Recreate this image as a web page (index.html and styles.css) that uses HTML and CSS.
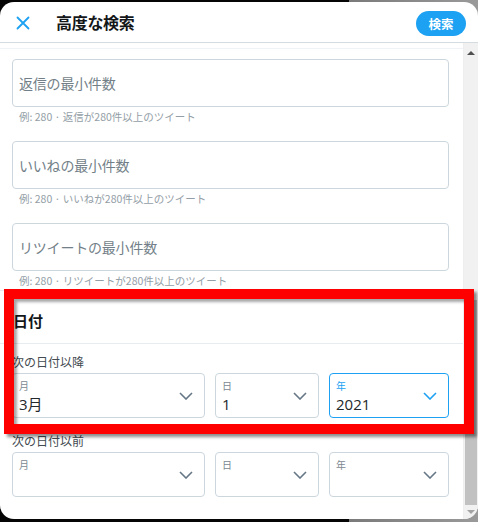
FILE: index.html
```html
<!DOCTYPE html>
<html lang="ja">
<head>
<meta charset="utf-8">
<link rel="stylesheet" href="styles.css">
</head>
<body>
<div class="modal">
  <header class="hdr">
    <span class="close">
      <svg width="14" height="14" viewBox="0 0 14 14"><path d="M1.5 1.5 L12.5 12.5 M12.5 1.5 L1.5 12.5" stroke="#1da1f2" stroke-width="1.8" fill="none" stroke-linecap="round"/></svg>
    </span>
    <h1 class="title">高度な検索</h1>
    <span class="search">検索</span>
  </header>
  <div class="body">
    <div class="scroll">
      <div class="topline"></div>
      <div class="field first"><span class="ph">返信の最小件数</span></div>
      <p class="help">例: 280 · 返信が280件以上のツイート</p>
      <div class="field"><span class="ph">いいねの最小件数</span></div>
      <p class="help">例: 280 · いいねが280件以上のツイート</p>
      <div class="field"><span class="ph">リツイートの最小件数</span></div>
      <p class="help">例: 280 · リツイートが280件以上のツイート</p>

      <div class="section"><h2 class="sec-title">日付</h2></div>

      <p class="lbl">次の日付以降</p>
      <div class="row">
        <div class="sel">
          <div class="sel-text"><span class="sl">月</span><span class="sv">3月</span></div>
          <svg class="chev" width="14" height="8" viewBox="0 0 14 8"><path d="M1 1 L7 7 L13 1" stroke="#657786" stroke-width="1.6" fill="none"/></svg>
        </div>
        <div class="sel">
          <div class="sel-text"><span class="sl">日</span><span class="sv">1</span></div>
          <svg class="chev" width="14" height="8" viewBox="0 0 14 8"><path d="M1 1 L7 7 L13 1" stroke="#657786" stroke-width="1.6" fill="none"/></svg>
        </div>
        <div class="sel focus">
          <div class="sel-text"><span class="sl">年</span><span class="sv">2021</span></div>
          <svg class="chev" width="14" height="8" viewBox="0 0 14 8"><path d="M1 1 L7 7 L13 1" stroke="#1da1f2" stroke-width="1.6" fill="none"/></svg>
        </div>
      </div>

      <p class="lbl second">次の日付以前</p>
      <div class="row">
        <div class="sel">
          <div class="sel-text"><span class="sl">月</span><span class="sv"></span></div>
          <svg class="chev" width="14" height="8" viewBox="0 0 14 8"><path d="M1 1 L7 7 L13 1" stroke="#657786" stroke-width="1.6" fill="none"/></svg>
        </div>
        <div class="sel">
          <div class="sel-text"><span class="sl">日</span><span class="sv"></span></div>
          <svg class="chev" width="14" height="8" viewBox="0 0 14 8"><path d="M1 1 L7 7 L13 1" stroke="#657786" stroke-width="1.6" fill="none"/></svg>
        </div>
        <div class="sel">
          <div class="sel-text"><span class="sl">年</span><span class="sv"></span></div>
          <svg class="chev" width="14" height="8" viewBox="0 0 14 8"><path d="M1 1 L7 7 L13 1" stroke="#657786" stroke-width="1.6" fill="none"/></svg>
        </div>
      </div>
    </div>
    <div class="sbar">
      <span class="arrow up"></span>
      <div class="track"><div class="thumb"></div></div>
      <span class="arrow down"></span>
    </div>
  </div>
  <div class="annot"></div>
</div>
</body>
</html>
```

FILE: styles.css
```css
* { box-sizing: border-box; }
html, body { margin: 0; padding: 0; }
body {
  width: 478px;
  height: 522px;
  overflow: hidden;
  background: linear-gradient(to right, #050505 0, #050505 73%, #7a7a7a 73%, #9a9a9a 100%);
  font-family: "Noto Sans CJK JP", "Noto Sans", sans-serif;
  color: #14171a;
}
.modal {
  position: relative;
  margin-top: 2px;
  width: 478px;
  height: 517px;
  background: #fff;
  border-radius: 14px;
  overflow: hidden;
  display: flex;
  flex-direction: column;
}
.hdr {
  height: 41px;
  flex: none;
  display: flex;
  align-items: center;
  padding: 0 12px 0 16px;
  border-bottom: 1px solid #d5dce1;
}
.close { width: 14px; height: 14px; display: flex; margin-top: 1px; }
.title {
  margin: 0 0 0 26px;
  font-size: 16px;
  font-weight: 700;
  line-height: 20px;
  flex: 1;
  letter-spacing: -0.3px;
}
.search {
  width: 50px;
  height: 25px;
  border-radius: 13px;
  background: #1da1f2;
  color: #fff;
  font-size: 12.5px;
  font-weight: 700;
  display: flex;
  align-items: center;
  justify-content: center;
  margin-top: 2px;
}
.body { flex: 1; display: flex; min-height: 0; }
.scroll { flex: 1; padding: 0 14px 0 12px; }
.topline { height: 6px; border-bottom: 1px solid #f0f3f5; margin: 0 -14px 0 -12px; }
.field {
  height: 48px;
  border: 1px solid #ccd6dd;
  border-radius: 4px;
  display: flex;
  align-items: center;
  padding-left: 6px;
  margin-top: 17px;
}
.field.first { margin-top: 10px; }
.ph { font-size: 14px; color: #737f88; letter-spacing: -0.2px; }
.help {
  margin: 3px 0 0;
  padding-left: 7px;
  height: 14px;
  line-height: 14px;
  font-size: 10.5px;
  color: #939ea6;
  white-space: nowrap;
}
.section {
  margin: 2px -14px 0 -12px;
  padding: 20px 12px 12px 13px;
  border-top: 1px solid #e6ecf0;
  border-bottom: 1px solid #e6ecf0;
}
.sec-title { margin: 0; font-size: 15px; font-weight: 700; line-height: 20px; }
.lbl {
  margin: 10px 0 0;
  font-size: 12px;
  line-height: 16px;
  color: #434a50;
}
.lbl.second { margin-top: 15px; }
.row {
  margin-top: 3px;
  display: grid;
  grid-template-columns: 193fr 104fr 120fr;
  gap: 10px;
}
.sel {
  height: 45px;
  border: 1px solid #ccd6dd;
  border-radius: 4px;
  display: flex;
  align-items: center;
  padding: 0 11px 0 6px;
}
.sel.focus { border-color: #1da1f2; }
.sel-text {
  flex: 1;
  display: flex;
  flex-direction: column;
  align-self: stretch;
  padding-top: 5px;
}
.sl { font-size: 10px; line-height: 13px; color: #7c8891; }
.focus .sl { color: #1da1f2; }
.sv { font-size: 15px; line-height: 18px; margin-top: 3px; color: #23282c; font-family: "Open Sans", "Noto Sans CJK JP", sans-serif; }
.chev { flex: none; }
.sbar {
  width: 15px;
  flex: none;
  background: #f1f1f1;
  display: flex;
  flex-direction: column;
  align-items: center;
  border-left: 1px solid #eeeeee;
}
.arrow { width: 0; height: 0; border-left: 4px solid transparent; border-right: 4px solid transparent; flex: none; }
.arrow.up { border-bottom: 4px solid #505050; margin: 8px 0 5px; }
.arrow.down { border-top: 4px solid #a3a3a3; margin: 5px 0 5px; }
.track { flex: 1; width: 100%; display: flex; flex-direction: column; justify-content: flex-end; }
.thumb { height: 205px; margin: 0 1px; background: #c1c1c1; }
.annot {
  position: absolute;
  left: 4px;
  top: 287px;
  width: 470px;
  height: 145px;
  border: 10px solid #ff0000;
  box-shadow: 3px 3px 3px rgba(0,0,0,0.45), inset 3px 3px 3px rgba(0,0,0,0.35);
  pointer-events: none;
}
```
